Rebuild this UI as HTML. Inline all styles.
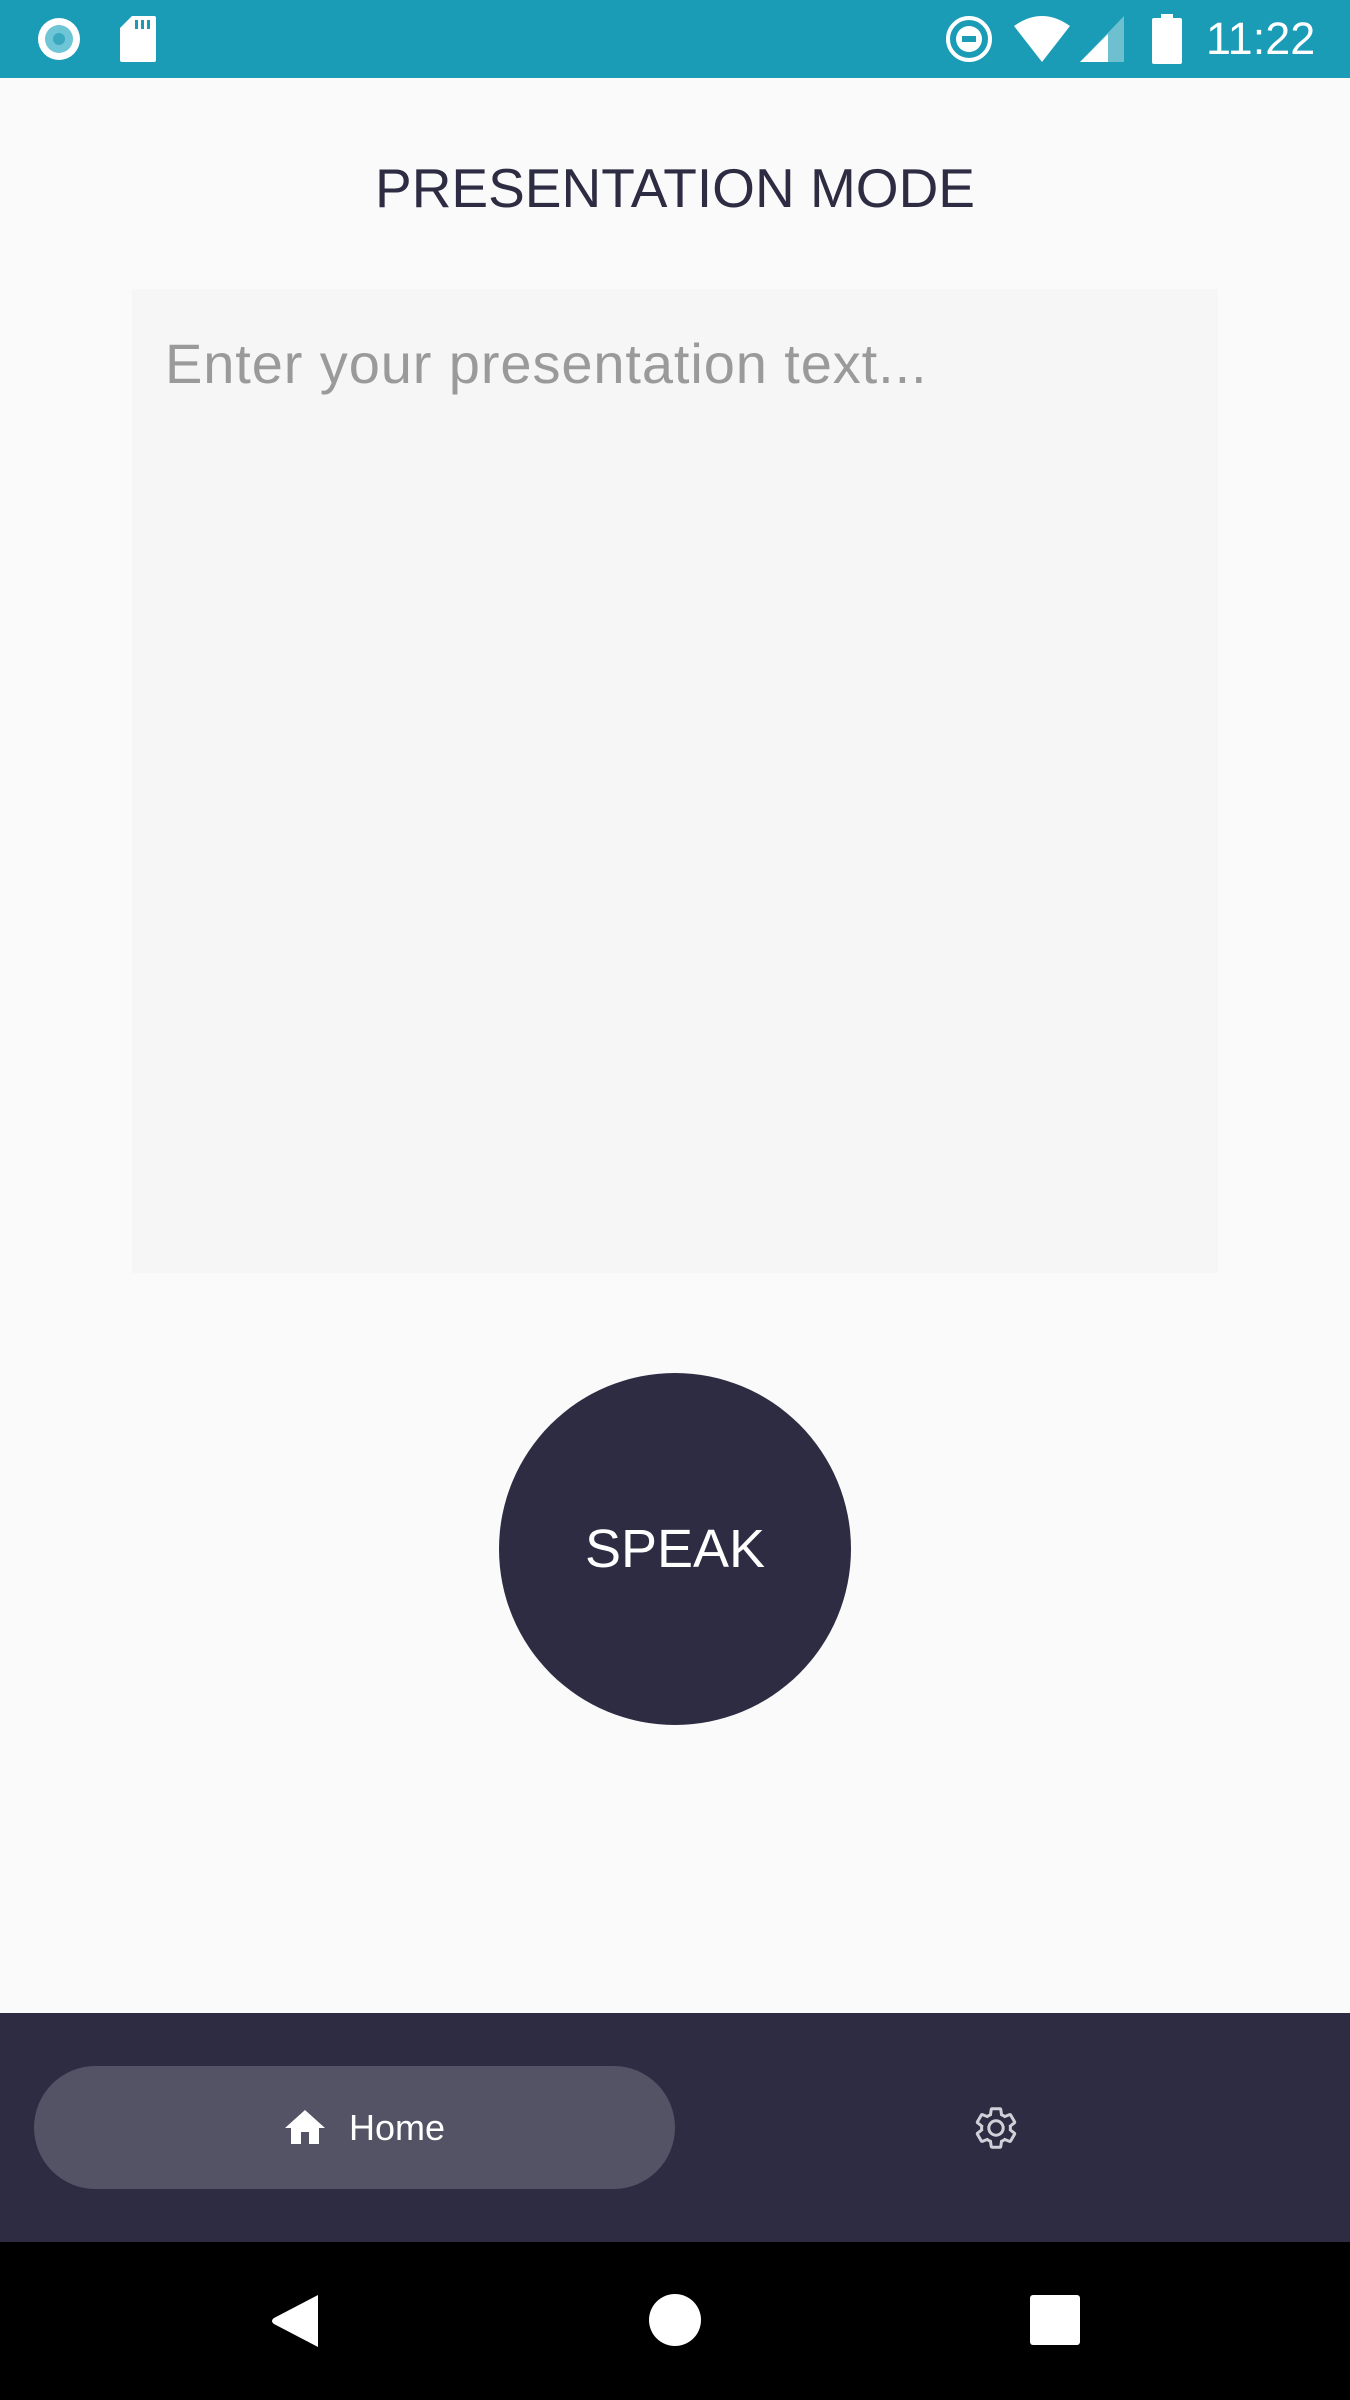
<!DOCTYPE html>
<html><head><meta charset="utf-8"><style>
*{margin:0;padding:0;box-sizing:border-box}
body{width:1350px;height:2400px;background:#fafafa;position:relative;overflow:hidden;font-family:"Liberation Sans",sans-serif}
.status{position:absolute;left:0;top:0;width:1350px;height:78px;background:#1a9bb6}
.abs{position:absolute}
</style></head><body>
<div class="status">
  <svg class="abs" style="left:34px;top:14px" width="50" height="50" viewBox="0 0 50 50"><circle cx="25" cy="25" r="21" fill="#fff"/><circle cx="25" cy="25" r="14" fill="#6ec5d6"/><circle cx="25" cy="25" r="6" fill="#3aa9c0"/></svg>
  <svg class="abs" style="left:118px;top:14px" width="40" height="50" viewBox="0 0 40 50"><path d="M14 2H36a2 2 0 0 1 2 2V46a2 2 0 0 1-2 2H4a2 2 0 0 1-2-2V14Z" fill="#fff"/><rect x="17" y="6" width="3" height="9" fill="#1a9bb6"/><rect x="23" y="6" width="3" height="9" fill="#1a9bb6"/><rect x="29" y="6" width="3" height="9" fill="#1a9bb6"/></svg>
  <svg class="abs" style="left:945px;top:15px" width="48" height="48" viewBox="0 0 48 48"><circle cx="24" cy="24" r="21" fill="none" stroke="#fff" stroke-width="4"/><circle cx="24" cy="24" r="13" fill="#fff"/><rect x="17" y="21" width="14" height="6" fill="#1a9bb6"/></svg>
  <svg class="abs" style="left:1012px;top:14px" width="64" height="50" viewBox="0 0 64 50"><path d="M2 12Q30-8 58 12L30 48Z" fill="#fff"/></svg>
  <svg class="abs" style="left:1078px;top:14px" width="48" height="50" viewBox="0 0 48 50"><path d="M46 2V48H2Z" fill="#6ec0d0"/><path d="M30 20V48H2Z" fill="#fff"/></svg>
  <svg class="abs" style="left:1150px;top:12px" width="34" height="54" viewBox="0 0 34 54"><rect x="11" y="2" width="12" height="6" fill="#fff"/><rect x="2" y="6" width="30" height="46" rx="2" fill="#fff"/></svg>
  <div class="abs" style="left:1206px;top:14px;color:#fff;font-size:45px;line-height:50px">11:22</div>
</div>
<div class="abs" style="left:0;width:1350px;top:158px;text-align:center;color:#2e2c42;font-size:55px;line-height:60px">PRESENTATION MODE</div>
<div class="abs" style="left:132px;top:289px;width:1086px;height:984px;background:#f6f6f6"></div>
<div class="abs" style="left:165px;top:334px;color:#9a9a9a;font-size:56px;letter-spacing:0.9px;line-height:60px">Enter your presentation text...</div>
<div class="abs" style="left:499px;top:1373px;width:352px;height:352px;border-radius:50%;background:#2e2c42;color:#fff;font-size:54px;line-height:352px;text-align:center">SPEAK</div>
<div class="abs" style="left:0;top:2013px;width:1350px;height:229px;background:#2e2c42"></div>
<div class="abs" style="left:34px;top:2066px;width:641px;height:123px;border-radius:62px;background:#545365"></div>
<svg class="abs" style="left:280px;top:2104px" width="50" height="48" viewBox="0 0 24 24"><path d="M10 20v-6h4v6h5v-8h3L12 3 2 12h3v8z" fill="#fff"/></svg>
<div class="abs" style="left:349px;top:2106px;color:#fff;font-size:36px;line-height:44px">Home</div>
<svg class="abs" style="left:972px;top:2104px" width="48" height="48" viewBox="0 0 24 24"><path d="M19.14 12.94c.04-.3.06-.61.06-.94 0-.32-.02-.64-.07-.94l2.030-1.58a.49.49 0 0 0 .12-.61l-1.92-3.32a.488.488 0 0 0-.59-.22l-2.39.96c-.5-.38-1.03-.7-1.62-.94l-.36-2.54a.484.484 0 0 0-.48-.41h-3.84c-.24 0-.43.17-.47.41l-.36 2.54c-.59.24-1.130.57-1.62.94l-2.39-.96c-.22-.08-.47 0-.59.22L2.74 8.87c-.12.21-.08.47.12.61l2.03 1.58c-.05.3-.09.63-.09.94s.02.64.07.94l-2.03 1.58a.49.49 0 0 0-.12.61l1.92 3.32c.12.22.37.29.59.22l2.39-.96c.5.38 1.03.7 1.62.94l.36 2.54c.05.24.24.41.48.41h3.84c.24 0 .44-.17.47-.41l.36-2.54c.59-.24 1.13-.56 1.62-.94l2.39.96c.22.08.47 0 .59-.22l1.92-3.32c.12-.22.07-.47-.12-.61l-2.01-1.58zM12 15.6c-1.98 0-3.6-1.62-3.6-3.6s1.62-3.6 3.6-3.6 3.6 1.62 3.6 3.6-1.62 3.6-3.6 3.6z" fill="none" stroke="#d0d0d8" stroke-width="1.5"/></svg>
<div class="abs" style="left:0;top:2242px;width:1350px;height:158px;background:#000"></div>
<svg class="abs" style="left:268px;top:2293px" width="54" height="56" viewBox="0 0 54 56"><path d="M50 2V54L6 31Q2 28 6 25Z" fill="#fff"/></svg>
<div class="abs" style="left:649px;top:2294px;width:52px;height:52px;border-radius:50%;background:#fff"></div>
<div class="abs" style="left:1030px;top:2295px;width:50px;height:50px;border-radius:3px;background:#fff"></div>
</body></html>
